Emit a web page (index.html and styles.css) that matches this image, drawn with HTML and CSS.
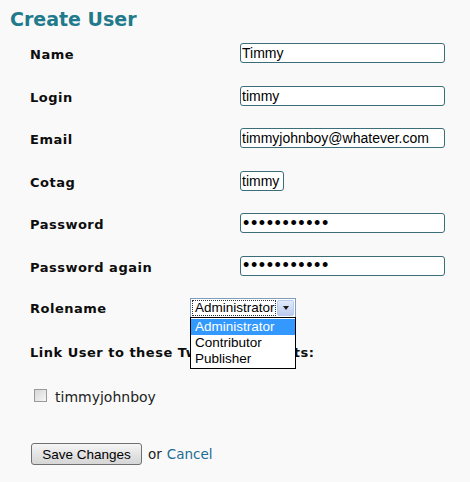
FILE: index.html
```
<!DOCTYPE html>
<html lang="en">
<head>
<meta charset="utf-8">
<title>Create User</title>
<link rel="stylesheet" href="styles.css">
</head>
<body>
<h1 class="title">Create User</h1>
<form class="user-form">
  <div class="rows">
    <div class="row">
      <label class="label" for="name">Name</label>
      <input class="field" id="name" type="text" value="Timmy">
    </div>
    <div class="row">
      <label class="label" for="login">Login</label>
      <input class="field" id="login" type="text" value="timmy">
    </div>
    <div class="row">
      <label class="label" for="email">Email</label>
      <input class="field" id="email" type="text" value="timmyjohnboy@whatever.com">
    </div>
    <div class="row">
      <label class="label" for="cotag">Cotag</label>
      <input class="field field-short" id="cotag" type="text" value="timmy">
    </div>
    <div class="row">
      <label class="label" for="pw">Password</label>
      <input class="field field-pw" id="pw" type="password" value="timmyjohnbo">
    </div>
    <div class="row">
      <label class="label" for="pw2">Password again</label>
      <input class="field field-pw" id="pw2" type="password" value="timmyjohnbo">
    </div>
    <div class="row row-role">
      <span class="label label-role">Rolename</span>
      <div class="combo">
        <div class="combo-box">
          <span class="combo-value">Administrator</span>
          <span class="combo-btn"><span class="combo-arrow"></span></span>
        </div>
        <ul class="combo-list">
          <li class="combo-item is-active">Administrator</li>
          <li class="combo-item">Contributor</li>
          <li class="combo-item">Publisher</li>
        </ul>
      </div>
    </div>
    <div class="row">
      <span class="label">Link User to these Twitter Accounts:</span>
    </div>
  </div>
  <div class="accounts">
    <input class="check" type="checkbox" id="acc1">
    <label class="check-label" for="acc1">timmyjohnboy</label>
  </div>
  <div class="actions">
    <button class="btn" type="button">Save Changes</button>
    <span class="or">or</span>
    <a class="cancel" href="#">Cancel</a>
  </div>
</form>
</body>
</html>
```

FILE: styles.css
```
html, body {
  margin: 0;
  padding: 0;
}
body {
  background: #f9f9f9;
  font-family: "DejaVu Sans", Verdana, sans-serif;
  color: #111;
  width: 470px;
  height: 482px;
  overflow: hidden;
}
.title {
  margin: 0;
  padding: 7px 0 0 10px;
  font-size: 19px;
  line-height: 24px;
  font-weight: bold;
  color: #217a8b;
}
.user-form {
  margin-top: 12px;
  padding-left: 30px;
}
.rows {
  display: grid;
  grid-auto-rows: 42.5px;
}
.row {
  display: flex;
  align-items: flex-start;
}
.label {
  width: 210px;
  flex: none;
  padding-top: 4px;
  font-size: 13px;
  line-height: 16px;
  letter-spacing: 0.5px;
  font-weight: bold;
  color: #0d0d0d;
  white-space: nowrap;
}
.label-role {
  width: 160px;
  padding-top: 3px;
}
.field {
  box-sizing: border-box;
  width: 205px;
  height: 20px;
  margin: 0;
  padding: 0 1px;
  border: 1px solid #3c6d7b;
  border-radius: 3px;
  background: #fff;
  font-family: "Liberation Sans", Arial, sans-serif;
  font-size: 14px;
  color: #000;
  outline: none;
}
.field-short {
  width: 44px;
}
.field-pw {
  font-size: 18px;
  letter-spacing: 1.6px;
  padding-left: 2px;
}
.combo {
  position: relative;
  width: 106px;
}
.combo-box {
  box-sizing: border-box;
  height: 20px;
  display: flex;
  align-items: stretch;
  border: 1px solid #7f9db9;
  background: #fff;
  padding: 1px;
}
.combo-value {
  flex: 1;
  min-width: 0;
  font-family: "Liberation Sans", Arial, sans-serif;
  font-size: 13.5px;
  line-height: 15px;
  padding: 0 0 0 3px;
  outline: 1px dotted #333;
  outline-offset: -1px;
  color: #000;
  white-space: nowrap;
  overflow: hidden;
}
.combo-btn {
  width: 15px;
  flex: none;
  margin-left: 1px;
  border: 1px solid #b9c9ef;
  border-radius: 2px;
  background: linear-gradient(#e3ebfc, #bccbee);
  display: flex;
  align-items: center;
  justify-content: center;
}
.combo-arrow {
  width: 0;
  height: 0;
  border-left: 3.5px solid transparent;
  border-right: 3.5px solid transparent;
  border-top: 4px solid #1b1b1b;
}
.combo-list {
  position: absolute;
  left: 0;
  top: 19px;
  box-sizing: border-box;
  width: 106px;
  margin: 0;
  padding: 1px 0;
  list-style: none;
  border: 1px solid #000;
  background: #fff;
  z-index: 2;
}
.combo-item {
  height: 16px;
  line-height: 16px;
  padding-left: 4px;
  font-family: "Liberation Sans", Arial, sans-serif;
  font-size: 13.5px;
  color: #000;
}
.combo-item.is-active {
  background: #3399ff;
  color: #fff;
}
.accounts {
  display: flex;
  align-items: flex-start;
  margin-top: 6px;
  padding-left: 4px;
}
.check {
  appearance: none;
  -webkit-appearance: none;
  box-sizing: border-box;
  width: 13px;
  height: 13px;
  margin: 0;
  border: 1px solid #9a9a9a;
  background: linear-gradient(135deg, #d6d6d6, #f6f6f6);
}
.check-label {
  margin-left: 8px;
  margin-top: 0;
  font-size: 14px;
  line-height: 16px;
  color: #222;
}
.actions {
  display: flex;
  align-items: center;
  margin-top: 38px;
  padding-left: 1px;
}
.btn {
  box-sizing: border-box;
  width: 111px;
  height: 22px;
  margin: 0;
  padding: 0;
  border: 1px solid #707070;
  border-radius: 3px;
  background: linear-gradient(#f6f6f6, #e2e2e2 55%, #d6d6d6);
  font-family: "Liberation Sans", Arial, sans-serif;
  font-size: 13.5px;
  color: #000;
}
.or {
  margin-left: 6px;
  font-size: 13.5px;
  color: #222;
}
.cancel {
  margin-left: 5px;
  font-size: 13.5px;
  color: #236c92;
  text-decoration: none;
}
```
